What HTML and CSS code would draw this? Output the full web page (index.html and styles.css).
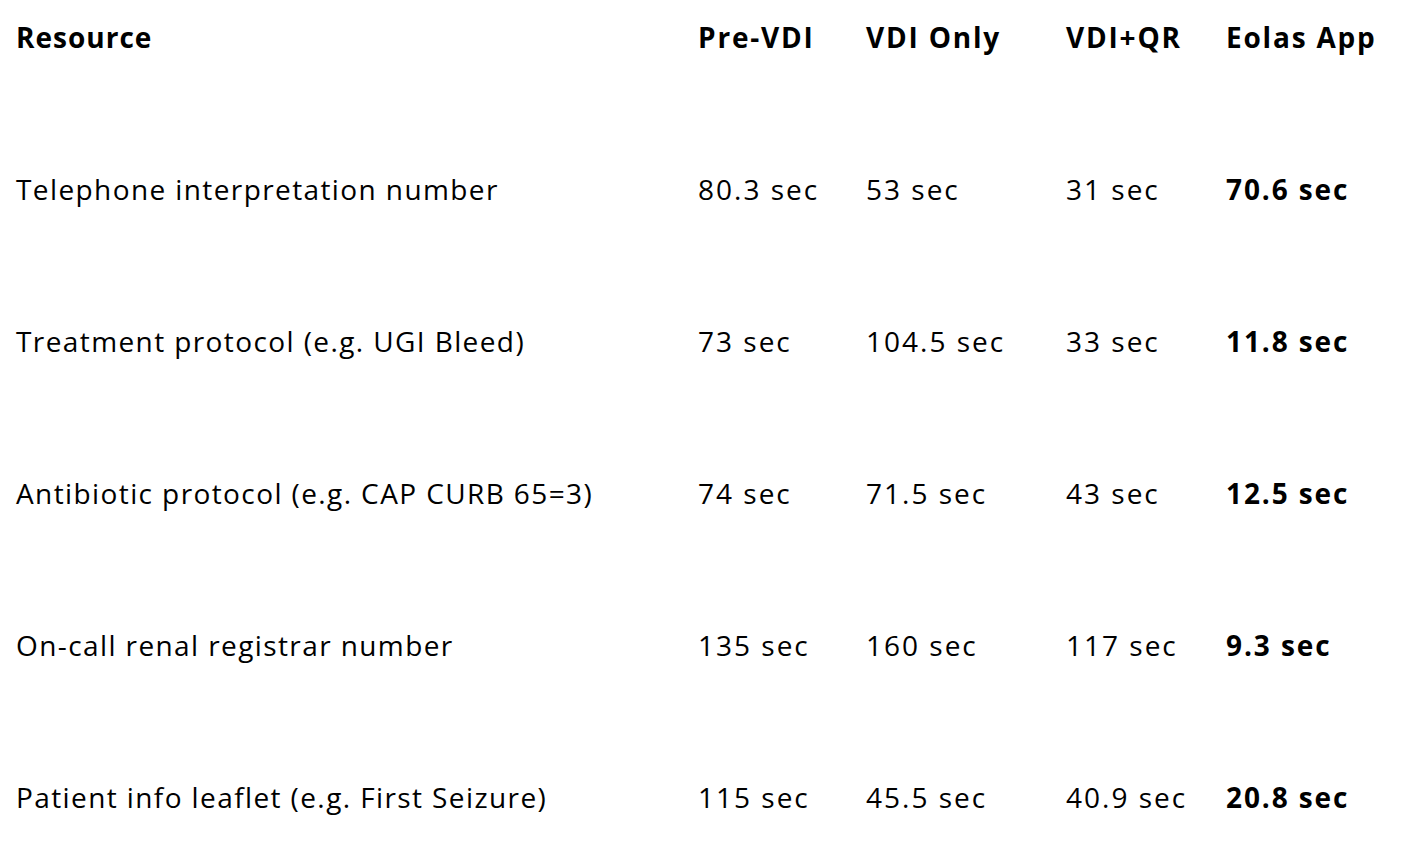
FILE: index.html
```html
<!DOCTYPE html>
<html lang="en">
<head>
<meta charset="utf-8">
<title>Resource comparison</title>
<link rel="stylesheet" href="styles.css">
</head>
<body>
<div class="table">
  <div class="row head">
    <div class="cell label">Resource</div>
    <div class="cell">Pre-VDI</div>
    <div class="cell">VDI Only</div>
    <div class="cell">VDI+QR</div>
    <div class="cell">Eolas App</div>
  </div>
  <div class="row">
    <div class="cell label">Telephone interpretation number</div>
    <div class="cell">80.3 sec</div>
    <div class="cell">53 sec</div>
    <div class="cell">31 sec</div>
    <div class="cell strong">70.6 sec</div>
  </div>
  <div class="row">
    <div class="cell label">Treatment protocol (e.g. UGI Bleed)</div>
    <div class="cell">73 sec</div>
    <div class="cell">104.5 sec</div>
    <div class="cell">33 sec</div>
    <div class="cell strong">11.8 sec</div>
  </div>
  <div class="row">
    <div class="cell label">Antibiotic protocol (e.g. CAP CURB 65=3)</div>
    <div class="cell">74 sec</div>
    <div class="cell">71.5 sec</div>
    <div class="cell">43 sec</div>
    <div class="cell strong">12.5 sec</div>
  </div>
  <div class="row">
    <div class="cell label">On-call renal registrar number</div>
    <div class="cell">135 sec</div>
    <div class="cell">160 sec</div>
    <div class="cell">117 sec</div>
    <div class="cell strong">9.3 sec</div>
  </div>
  <div class="row">
    <div class="cell label">Patient info leaflet (e.g. First Seizure)</div>
    <div class="cell">115 sec</div>
    <div class="cell">45.5 sec</div>
    <div class="cell">40.9 sec</div>
    <div class="cell strong">20.8 sec</div>
  </div>
</div>
</body>
</html>
```
FILE: styles.css
```css
html, body {
  margin: 0;
  padding: 0;
  background: #ffffff;
}
body {
  font-family: "Open Sans", "Noto Sans", sans-serif;
  font-size: 28px;
  line-height: 36px;
  color: #000000;
}
.table {
  display: flex;
  flex-direction: column;
  padding-left: 16px;
}
.row {
  display: grid;
  grid-template-columns: 682px 168px 200px 160px 1fr;
  align-items: center;
  height: 152px;
  box-sizing: border-box;
  padding-bottom: 2px;
}
.row.head {
  height: 114px;
  align-items: start;
  padding-top: 19px;
  padding-bottom: 0;
  font-weight: 700;
}
.cell {
  white-space: nowrap;
  letter-spacing: 2px;
}
.cell.label {
  letter-spacing: 1.4px;
}
.row.head .cell {
  letter-spacing: 1.8px;
}
.row.head .cell.label {
  letter-spacing: 1px;
}
.strong {
  font-weight: 700;
  letter-spacing: 1.9px;
}
```
